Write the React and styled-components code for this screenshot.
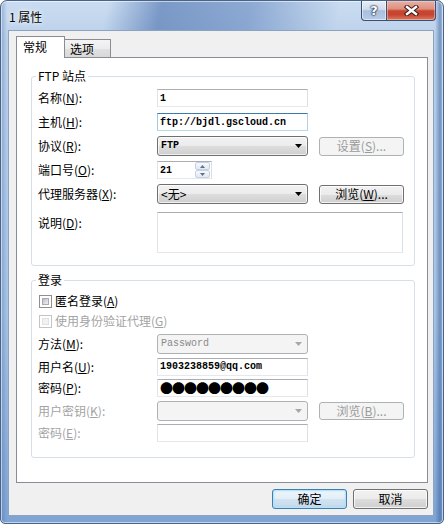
import React from 'react';
import styled, { createGlobalStyle, css } from 'styled-components';

const CJK = `"Noto Sans CJK SC", "Noto Sans", sans-serif`;
const MONO = `"Liberation Mono", "DejaVu Sans Mono", monospace`;

const Global = createGlobalStyle`
  html, body { margin: 0; padding: 0; background: #ffffff; }
  body { font-family: ${CJK}; font-size: 12px; color: #000; }
  *, *::before, *::after { box-sizing: border-box; }
  u { text-decoration-thickness: 1px; text-underline-offset: 1px; }
`;

const Window = styled.div`
  width: 444px;
  height: 524px;
  display: flex;
  flex-direction: column;
  border: 1px solid #46648c;
  border-radius: 7px 7px 5px 5px;
  overflow: hidden;
  background:
    linear-gradient(102deg, rgba(120,160,210,0) 24%, rgba(60,100,165,0.55) 36%, rgba(70,110,175,0.45) 56%, rgba(120,160,210,0) 76%) 0 0 / 100% 30px no-repeat,
    linear-gradient(90deg, rgba(60,100,160,0.35) 0, rgba(60,100,160,0) 6px, rgba(60,100,160,0) calc(100% - 8px), rgba(50,90,150,0.5) calc(100% - 3px), rgba(60,100,160,0.2) 100%),
    linear-gradient(180deg, #cadcf1 0%, #b9d0ea 8%, #a7c3e5 60%, #7fa4d4 100%);
  box-shadow: inset 0 0 0 1px rgba(255,255,255,0.55);
`;

const TitleBar = styled.div`
  height: 29px;
  flex: none;
  display: flex;
  align-items: flex-start;
  padding-left: 8px;
`;

const Title = styled.div`
  padding-top: 8px;
  line-height: 16px;
  font-size: 12px;
  color: #000;
  text-shadow: 0 0 6px rgba(255,255,255,0.95), 0 0 3px rgba(255,255,255,0.9);
`;

const CaptionButtons = styled.div`
  margin-left: auto;
  margin-right: 7px;
  display: flex;
`;

const CapBtn = styled.div`
  height: 20px;
  display: flex;
  align-items: center;
  justify-content: center;
  border: 1px solid #3c4f70;
  border-top: none;
  ${p => p.close ? css`
    width: 49px;
    border-left: none;
    border-radius: 0 0 4px 0;
    background: linear-gradient(#eab0a2 0%, #dd8f7f 42%, #c8462f 52%, #c64430 72%, #d97a62 100%);
    box-shadow: inset 0 0 0 1px rgba(255,220,210,0.45);
  ` : css`
    width: 26px;
    border-radius: 0 0 0 4px;
    background: linear-gradient(#e6eef7 0%, #cfdcee 44%, #a8bedc 52%, #b7cce6 100%);
    box-shadow: inset 0 0 0 1px rgba(255,255,255,0.5);
  `}
`;

const HelpGlyph = styled.span`
  font-family: "DejaVu Sans", sans-serif;
  font-weight: bold;
  font-size: 13px;
  line-height: 13px;
  color: #fff;
  text-shadow: 0 0 1px #1f2d45, 0 0 2px #1f2d45, 0 0 2px #1f2d45;
`;

const Client = styled.div`
  flex: none;
  height: 486px;
  margin: 0 9px 0 7px;
  border: 1px solid #8da2bf;
  background: #f0f0f0;
  padding: 5px 5px 6px 7px;
  display: flex;
  flex-direction: column;
`;

const Tabs = styled.div`
  height: 21px;
  display: flex;
  align-items: flex-end;
`;

const Tab = styled.div`
  border: 1px solid #898c95;
  border-bottom: none;
  font-size: 12px;
  white-space: nowrap;
  ${p => p.active ? css`
    width: 49px;
    height: 22px;
    margin-bottom: -1px;
    position: relative;
    z-index: 1;
    background: #ffffff;
    padding-left: 6px;
    line-height: 20px;
  ` : css`
    width: 47px;
    height: 18px;
    margin-left: -1px;
    background: linear-gradient(#f4f4f4 0%, #ececec 50%, #e1e1e1 51%, #d8d8d8 100%);
    padding-left: 5px;
    line-height: 18px;
  `}
`;

const Panel = styled.div`
  width: 412px;
  height: 426px;
  flex: none;
  border: 1px solid #898c95;
  background: #ffffff;
  padding: 11px 12px 0 14px;
`;

const Group = styled.fieldset`
  margin: ${p => p.mt || 0}px 0 0;
  padding: 0 6px ${p => p.pb}px;
  border: 1px solid #d5dfe5;
  border-radius: 3px;
  min-width: 0;
`;

const Caption = styled.legend`
  padding: 0 2px;
  margin-left: -2px;
  line-height: 14px;
  font-size: 12px;
`;

const Rows = styled.div`
  display: flex;
  flex-direction: column;
  padding-top: ${p => p.pt}px;
`;

const Row = styled.div`
  display: grid;
  grid-template-columns: 108px 151px 85px;
  column-gap: 11px;
  align-items: ${p => p.top ? 'start' : 'center'};
  height: ${p => p.h}px;
  margin-top: ${p => p.mt || 0}px;
`;

const Label = styled.span`
  color: ${p => p.disabled ? '#a3a3a3' : '#000'};
  line-height: 14px;
  white-space: nowrap;
  ${p => p.top && css`padding-top: 4px;`}
`;

const TextBox = styled.div`
  width: ${p => p.w || 151}px;
  height: ${p => p.h || 18}px;
  ${p => p.span && css`grid-column: 2 / -1;`}
  border: 1px solid;
  border-color: #abadb3 #dbdfe6 #e3e9ef #e2e3ea;
  background: #fff;
  display: flex;
  align-items: center;
  padding: 0 1px 0 2px;
  font-family: ${MONO};
  font-size: 10px;
  font-weight: bold;
  color: #000;
  white-space: nowrap;
  overflow: hidden;
  ${p => p.focused && css`border-color: #3d7bad #b5cfe7 #b7d9ed #a4c9e3;`}
  ${p => p.disabled && css`border-color: #c2c4c8 #dadde2 #e3e6ea #dadde2;`}
`;

const Dots = styled.span`
  font-family: ${CJK};
  font-size: 13px;
  font-weight: normal;
  letter-spacing: -1px;
  line-height: 14px;
`;

const Combo = styled.div`
  width: 151px;
  height: 20px;
  border: 1px solid ${p => p.disabled ? '#adb2b5' : '#707070'};
  border-radius: 3px;
  background: ${p => p.disabled
    ? '#f4f4f4'
    : 'linear-gradient(#f2f2f2 0%, #ebebeb 50%, #dddddd 51%, #cfcfcf 100%)'};
  box-shadow: ${p => p.disabled ? 'none' : 'inset 0 0 0 1px rgba(255,255,255,0.7)'};
  display: flex;
  align-items: center;
  padding: 0 5px 0 3px;
  color: ${p => p.disabled ? '#8a8a8a' : '#000'};
  white-space: nowrap;
`;

const ComboText = styled.span`
  flex: 1;
  font-family: ${p => p.mono ? MONO : CJK};
  font-size: ${p => p.mono ? '10px' : '12px'};
  font-weight: ${p => p.bold ? 'bold' : 'normal'};
  line-height: 14px;
`;

const Btn = styled.div`
  width: ${p => p.w || 85}px;
  height: ${p => p.h || 19}px;
  border: 1px solid #707070;
  border-radius: 3px;
  background: linear-gradient(#f2f2f2 0%, #ebebeb 50%, #dddddd 51%, #cfcfcf 100%);
  box-shadow: inset 0 0 0 1px rgba(255,255,255,0.75);
  display: flex;
  align-items: center;
  justify-content: center;
  font-size: 12px;
  line-height: 14px;
  color: #000;
  white-space: nowrap;
  ${p => p.disabled && css`
    border-color: #adb2b5;
    background: #f4f4f4;
    box-shadow: none;
    color: #9a9a9a;
  `}
  ${p => p.primary && css`
    border-color: #3c7fb1;
    background: linear-gradient(#eef6fb 0%, #e3eef7 50%, #d1e3f1 51%, #c4daec 100%);
    box-shadow: inset 0 0 0 1px #b9e2f8, inset 0 0 2px 1px rgba(100,200,250,0.35);
  `}
`;

const PortBox = styled(TextBox)`
  width: 55px;
  padding-right: 1px;
`;

const PortValue = styled.span`
  flex: 1;
`;

const Spinner = styled.div`
  width: 15px;
  height: 16px;
  display: flex;
  flex-direction: column;
`;

const SpinHalf = styled.div`
  flex: 1;
  display: flex;
  align-items: center;
  justify-content: center;
  border: 1px solid #c6d2e2;
  border-radius: 2px;
  background: linear-gradient(#f6f9fc, #e2e9f2);
`;

const CheckRow = styled.div`
  display: flex;
  align-items: center;
  height: ${p => p.h}px;
  padding-left: 1px;
  gap: 3px;
  color: ${p => p.disabled ? '#a3a3a3' : '#000'};
  line-height: 14px;
`;

const Box = styled.span`
  width: 13px;
  height: 13px;
  flex: none;
  border: 1px solid ${p => p.disabled ? '#c4c4c4' : '#8e8f8f'};
  background: #fff;
  padding: 2px;
  display: flex;
  &::after {
    content: '';
    flex: 1;
    background: ${p => p.disabled
      ? '#f2f2f2'
      : 'linear-gradient(135deg, #b8bcc2 0%, #dcdee1 60%, #eeeeef 100%)'};
    border: 1px solid ${p => p.disabled ? '#e0e0e0' : '#a8acb2'};
  }
`;

const Footer = styled.div`
  margin-top: 6px;
  display: flex;
  justify-content: flex-end;
  gap: 6px;
`;

const Arrow = ({ color = '#000' }) => (
  <svg width="7" height="4" viewBox="0 0 7 4"><path d="M0 0h7L3.5 4z" fill={color} /></svg>
);

const SpinArrow = ({ up }) => (
  <svg width="5" height="3" viewBox="0 0 5 3">
    <path d={up ? 'M0 3h5L2.5 0z' : 'M0 0h5L2.5 3z'} fill="#5b6f8e" />
  </svg>
);

const CloseX = () => (
  <svg width="15" height="11" viewBox="0 0 15 11">
    <path d="M3 2L12 9M12 2L3 9" stroke="#3a1a16" strokeWidth="4.4" strokeLinecap="square" />
    <path d="M3 2L12 9M12 2L3 9" stroke="#ffffff" strokeWidth="2.4" strokeLinecap="square" />
  </svg>
);

export default function App() {
  return (
    <>
      <Global />
      <Window>
        <TitleBar>
          <Title>1 属性</Title>
          <CaptionButtons>
            <CapBtn><HelpGlyph>?</HelpGlyph></CapBtn>
            <CapBtn close><CloseX /></CapBtn>
          </CaptionButtons>
        </TitleBar>
        <Client>
          <Tabs>
            <Tab active>常规</Tab>
            <Tab>选项</Tab>
          </Tabs>
          <Panel>
            <Group pb={12}>
              <Caption>FTP 站点</Caption>
              <Rows pt={3}>
                <Row h={24}>
                  <Label>名称(<u>N</u>):</Label>
                  <TextBox>1</TextBox>
                </Row>
                <Row h={24}>
                  <Label>主机(<u>H</u>):</Label>
                  <TextBox focused>ftp://bjdl.gscloud.cn</TextBox>
                </Row>
                <Row h={24}>
                  <Label>协议(<u>R</u>):</Label>
                  <Combo><ComboText mono bold>FTP</ComboText><Arrow /></Combo>
                  <Btn disabled>设置(<u>S</u>)...</Btn>
                </Row>
                <Row h={24}>
                  <Label>端口号(<u>O</u>):</Label>
                  <PortBox>
                    <PortValue>21</PortValue>
                    <Spinner>
                      <SpinHalf><SpinArrow up /></SpinHalf>
                      <SpinHalf><SpinArrow /></SpinHalf>
                    </Spinner>
                  </PortBox>
                </Row>
                <Row h={24}>
                  <Label>代理服务器(<u>X</u>):</Label>
                  <Combo><ComboText>&lt;无&gt;</ComboText><Arrow /></Combo>
                  <Btn>浏览(<u>W</u>)...</Btn>
                </Row>
                <Row h={41} mt={6} top>
                  <Label top>说明(<u>D</u>):</Label>
                  <TextBox span w={246} h={41} />
                </Row>
              </Rows>
            </Group>
            <Group mt={7} pb={14}>
              <Caption>登录</Caption>
              <Rows pt={4}>
                <CheckRow h={20}>
                  <Box />
                  <span>匿名登录(<u>A</u>)</span>
                </CheckRow>
                <CheckRow h={20} disabled>
                  <Box disabled />
                  <span>使用身份验证代理(<u>G</u>)</span>
                </CheckRow>
                <Row h={25}>
                  <Label>方法(<u>M</u>):</Label>
                  <Combo disabled><ComboText mono>Password</ComboText><Arrow color="#a7a7a7" /></Combo>
                </Row>
                <Row h={21}>
                  <Label>用户名(<u>U</u>):</Label>
                  <TextBox>1903238859@qq.com</TextBox>
                </Row>
                <Row h={21}>
                  <Label>密码(<u>P</u>):</Label>
                  <TextBox><Dots>●●●●●●●●●</Dots></TextBox>
                </Row>
                <Row h={25}>
                  <Label disabled>用户密钥(<u>K</u>):</Label>
                  <Combo disabled><ComboText /><Arrow color="#a7a7a7" /></Combo>
                  <Btn disabled h={18}>浏览(<u>B</u>)...</Btn>
                </Row>
                <Row h={20}>
                  <Label disabled>密码(<u>E</u>):</Label>
                  <TextBox />
                </Row>
              </Rows>
            </Group>
          </Panel>
          <Footer>
            <Btn primary w={75} h={20}>确定</Btn>
            <Btn w={75} h={20}>取消</Btn>
          </Footer>
        </Client>
      </Window>
    </>
  );
}
